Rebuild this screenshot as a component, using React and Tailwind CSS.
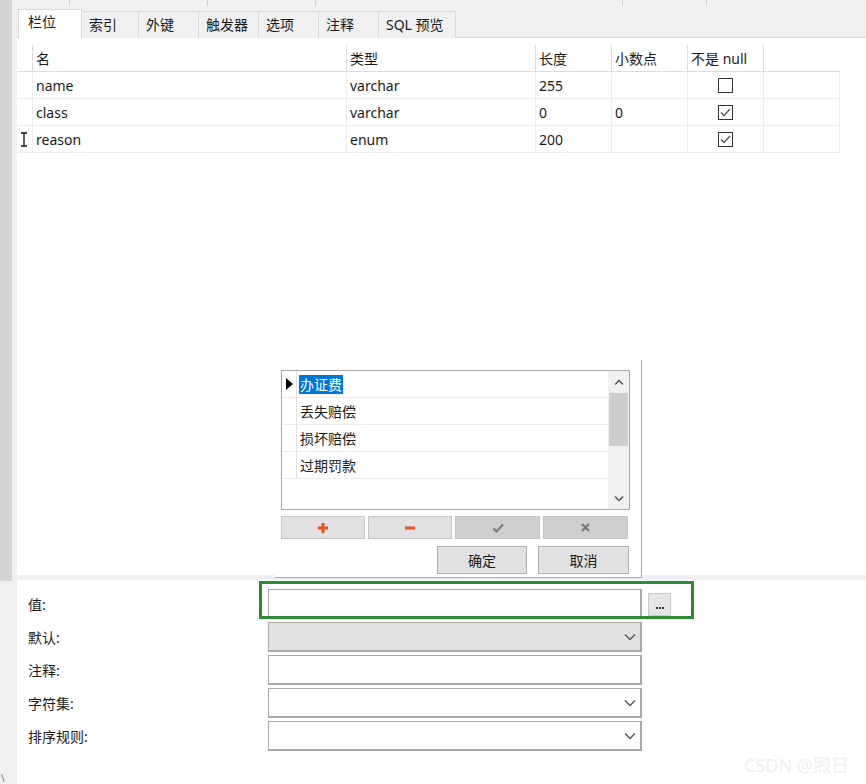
import React from "react";

const FONT = { fontFamily: '"Noto Sans", "Noto Sans CJK SC", sans-serif' };

function CheckBox({ checked }) {
  return (
    <div className="w-[15px] h-[15px] border border-[#333] bg-white flex items-center justify-center">
      {checked && (
        <svg width="13" height="13" viewBox="0 0 13 13">
          <path d="M2 6.5 L5 9.5 L11 3" fill="none" stroke="#555" strokeWidth="1.3" />
        </svg>
      )}
    </div>
  );
}

function Chevron() {
  return (
    <svg width="12" height="8" viewBox="0 0 12 8">
      <path d="M1 1.5 L6 6.5 L11 1.5" fill="none" stroke="#555" strokeWidth="1.4" />
    </svg>
  );
}

const tabs = [
  { label: "栏位", w: "w-[64px]", active: true },
  { label: "索引", w: "w-[57px]" },
  { label: "外键", w: "w-[60px]" },
  { label: "触发器", w: "w-[60px]" },
  { label: "选项", w: "w-[60px]" },
  { label: "注释", w: "w-[60px]" },
  { label: "SQL 预览", w: "w-[77px]" },
];

const rows = [
  { name: "name", type: "varchar", len: "255", dec: "", nn: false },
  { name: "class", type: "varchar", len: "0", dec: "0", nn: true },
  { name: "reason", type: "enum", len: "200", dec: "", nn: true, cursor: true },
];

const grid = "grid grid-cols-[15px_314px_189px_76px_76px_76px_77px] w-[823px]";

function IBeam() {
  return (
    <svg width="8" height="15" viewBox="0 0 8 15">
      <path d="M1 1 H7 M4 1 V14 M1 14 H7" fill="none" stroke="#111" strokeWidth="1.3" />
    </svg>
  );
}

function FieldTable() {
  return (
    <div className="pt-[7px] text-[14px] text-[#1a1a1a]">
      <div className={`${grid} h-[27px] border-b border-[#dcdcdc]`}>
        <div />
        {["名", "类型", "长度", "小数点", "不是 null", ""].map((h, i) => (
          <div key={i} className="border-l border-[#dcdcdc] pl-[3px] flex items-center">
            {h}
          </div>
        ))}
      </div>
      {rows.map((r) => (
        <div key={r.name} className={`${grid} h-[27px] border-b border-[#ececec]`}>
          <div className="flex items-center pl-[3px]">{r.cursor && <IBeam />}</div>
          <div className="border-l border-[#ececec] pl-[3px] flex items-center">{r.name}</div>
          <div className="border-l border-[#ececec] pl-[3px] flex items-center">{r.type}</div>
          <div className="border-l border-[#ececec] pl-[3px] flex items-center">{r.len}</div>
          <div className="border-l border-[#ececec] pl-[3px] flex items-center">{r.dec}</div>
          <div className="border-l border-[#ececec] flex items-center justify-center">
            <CheckBox checked={r.nn} />
          </div>
          <div className="border-l border-r border-[#ececec]" />
        </div>
      ))}
    </div>
  );
}

function EnumPopup() {
  const items = ["办证费", "丢失赔偿", "损坏赔偿", "过期罚款"];
  return (
    <div className="absolute left-[275px] top-[360px] w-[367px] h-[218px] border-r border-b border-[#a8a8a8] bg-white text-[14px] text-[#1a1a1a]">
      <div className="ml-[6px] mt-[10px] w-[349px] h-[140px] border border-[#a8a8a8] flex">
        <div className="flex-1">
          {items.map((t, i) => (
            <div key={t} className="flex h-[27px] border-b border-[#ececec]">
              <div className="w-[15px] border-r border-[#e0e0e0] flex items-center justify-center">
                {i === 0 && (
                  <svg width="7" height="12" viewBox="0 0 7 12">
                    <path d="M0 0 L7 6 L0 12 Z" fill="#000" />
                  </svg>
                )}
              </div>
              <div className="pl-[2px] flex items-center">
                <span className={i === 0 ? "bg-[#0078d7] text-white px-[1px] leading-[19px]" : "px-[1px]"}>{t}</span>
              </div>
            </div>
          ))}
        </div>
        <div className="w-[21px] bg-[#f0f0f0] flex flex-col items-center">
          <div className="h-[22px] flex items-center">
            <svg width="10" height="7" viewBox="0 0 10 7">
              <path d="M1 5.5 L5 1.5 L9 5.5" fill="none" stroke="#555" strokeWidth="1.5" />
            </svg>
          </div>
          <div className="w-[19px] h-[53px] bg-[#cdcdcd]" />
          <div className="flex-1" />
          <div className="h-[22px] flex items-center">
            <svg width="10" height="7" viewBox="0 0 10 7">
              <path d="M1 1.5 L5 5.5 L9 1.5" fill="none" stroke="#555" strokeWidth="1.5" />
            </svg>
          </div>
        </div>
      </div>
      <div className="ml-[6px] mt-[6px] flex gap-[3px] w-[349px]">
        <div className="w-[84px] h-[23px] bg-[#e1e1e1] border border-[#c4c4c4] flex items-center justify-center">
          <svg width="12" height="12" viewBox="0 0 12 12">
            <path d="M6 1 V11 M1 6 H11" stroke="#e8541c" strokeWidth="3" />
          </svg>
        </div>
        <div className="w-[84px] h-[23px] bg-[#e1e1e1] border border-[#c4c4c4] flex items-center justify-center">
          <svg width="12" height="6" viewBox="0 0 12 6">
            <path d="M1 3 H11" stroke="#e8541c" strokeWidth="3" />
          </svg>
        </div>
        <div className="w-[85px] h-[23px] bg-[#cecece] border border-[#c4c4c4] flex items-center justify-center">
          <svg width="12" height="10" viewBox="0 0 12 10">
            <path d="M1.5 5.5 L4.5 8.5 L11 1.5" fill="none" stroke="#777" strokeWidth="2" />
          </svg>
        </div>
        <div className="w-[85px] h-[23px] bg-[#cecece] border border-[#c4c4c4] flex items-center justify-center">
          <svg width="11" height="11" viewBox="0 0 11 11">
            <path d="M2 2 L9 9 M9 2 L2 9" stroke="#777" strokeWidth="2.2" />
          </svg>
        </div>
      </div>
      <div className="mt-[7px] w-[354px] flex justify-end gap-[11px]">
        <div className="w-[90px] h-[28px] bg-[#e1e1e1] border border-[#adadad] flex items-center justify-center">确定</div>
        <div className="w-[91px] h-[28px] bg-[#e1e1e1] border border-[#adadad] flex items-center justify-center">取消</div>
      </div>
    </div>
  );
}

function FormRow({ label, children }) {
  return (
    <div className="flex h-[30px] items-center">
      <div className="w-[251px] pl-[11px] text-[14px] text-[#1a1a1a]">{label}</div>
      {children}
    </div>
  );
}

const box = "w-[374px] h-[30px] border-t border-l border-r-2 border-b-2 border-[#a8a8a8]";

export default function App() {
  return (
    <div className="relative w-[866px] h-[784px] bg-white overflow-hidden flex" style={FONT}>
      {/* left strip */}
      <div className="w-[17px] bg-[#f0f0f0] shrink-0 flex flex-col">
        <div className="w-[12px] h-[581px] bg-[#d4d4d4]" />
        <div className="flex-1" />
        <div className="text-[10px] text-[#777] leading-none pl-[1px] pb-[1px]">\</div>
      </div>

      <div className="flex-1 flex flex-col">
        {/* tab bar */}
        <div className="h-[38px] bg-[#f0f0f0] border-b border-[#d9d9d9] relative">
          <div className="flex h-[6px]">
            <div className="w-[53px] border-r border-[#d0d0d0]" />
            <div className="w-[138px] border-r border-[#d0d0d0]" />
            <div className="w-[108px] border-r border-[#d0d0d0]" />
            <div className="w-[307px] border-r border-[#d0d0d0]" />
            <div className="w-[84px] border-r border-[#d0d0d0]" />
          </div>
          <div className="flex items-end ml-[1px] mt-[2px] text-[14px] text-[#1a1a1a]">
            {tabs.map((t) =>
              t.active ? (
                <div key={t.label} className={`${t.w} h-[30px] bg-white border border-b-0 border-[#d9d9d9] pl-[9px] pt-[1px] relative top-[1px]`}>
                  {t.label}
                </div>
              ) : (
                <div key={t.label} className={`${t.w} h-[27px] bg-[#f0f0f0] border-t border-r border-[#d9d9d9] pl-[7px] pt-[2px]`}>
                  {t.label}
                </div>
              )
            )}
          </div>
        </div>

        {/* table area */}
        <div className="h-[537px] bg-white">
          <FieldTable />
        </div>
        <div className="h-[5px] bg-[#f0f0f0]" />

        {/* form */}
        <div className="flex-1 bg-white pt-[9px] flex flex-col gap-[3px]">
          <FormRow label="值:">
            <div className={`${box} bg-white`} />
            <div className="ml-[6px] w-[23px] h-[23px] bg-[#e6e6e6] border border-[#c8c8c8] flex items-end justify-center pb-[6px]">
              <div className="flex gap-[1px]">
                <div className="w-[2px] h-[2px] bg-[#333]" />
                <div className="w-[2px] h-[2px] bg-[#333]" />
                <div className="w-[2px] h-[2px] bg-[#333]" />
              </div>
            </div>
          </FormRow>
          <FormRow label="默认:">
            <div className={`${box} bg-[#e1e1e1] flex items-center justify-end pr-[4px]`}>
              <Chevron />
            </div>
          </FormRow>
          <FormRow label="注释:">
            <div className={`${box} bg-white`} />
          </FormRow>
          <FormRow label="字符集:">
            <div className={`${box} bg-white flex items-center justify-end pr-[4px]`}>
              <Chevron />
            </div>
          </FormRow>
          <FormRow label="排序规则:">
            <div className={`${box} bg-white flex items-center justify-end pr-[4px]`}>
              <Chevron />
            </div>
          </FormRow>
        </div>
      </div>

      <EnumPopup />

      {/* highlight box */}
      <div className="absolute left-[259px] top-[581px] w-[435px] h-[38px] border-[3px] border-[#2f8a36]" />

      <div className="absolute left-[744px] top-[752px] text-[18px] text-[#efefef]">CSDN @煦日</div>
    </div>
  );
}
